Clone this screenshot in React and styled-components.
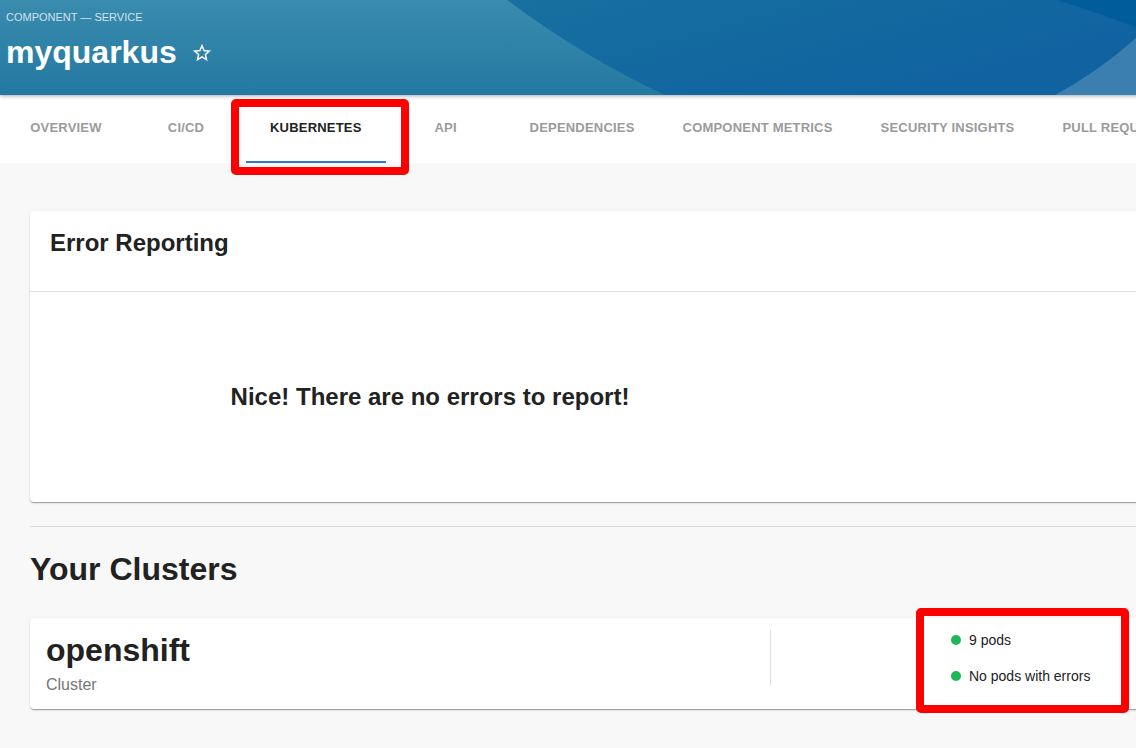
import styled, { createGlobalStyle } from "styled-components";

const GlobalStyle = createGlobalStyle`
  html, body {
    margin: 0;
    padding: 0;
    overflow: hidden;
    background: #f8f8f8;
  }

  * {
    box-sizing: border-box;
  }

  body {
    font-family: "Liberation Sans", Arial, sans-serif;
    color: #222;
  }
`;

const Page = styled.div`
  position: relative;
  width: 1400px;
  min-height: 748px;
  background: #f8f8f8;
`;

const Header = styled.header`
  position: relative;
  height: 95px;
  padding: 10px 6px 0;
  color: #fff;
  overflow: hidden;
  box-shadow: 0 1px 4px rgba(0, 0, 0, 0.35);
  z-index: 2;

  .waves {
    position: absolute;
    top: 0;
    left: 0;
    width: 1136px;
    height: 95px;
    z-index: -1;
  }
`;

const Kind = styled.div`
  font-size: 11px;
  line-height: 14px;
  color: rgba(255, 255, 255, 0.78);
`;

const TitleRow = styled.div`
  display: flex;
  align-items: center;
  gap: 14px;
  margin-top: 10px;

  h1 {
    margin: 0;
    font-size: 32px;
    line-height: 36px;
    font-weight: 700;
  }

  svg {
    width: 22px;
    height: 22px;
    fill: #fff;
    margin-top: 1px;
  }
`;

const TabBar = styled.nav`
  display: flex;
  height: 68px;
  padding-left: 6px;
  background: #fff;
`;

const Tab = styled.div`
  position: relative;
  display: flex;
  align-items: center;
  justify-content: center;
  min-width: 120px;
  padding: 0 24px 4px;
  font-size: 13px;
  font-weight: 700;
  letter-spacing: 0.2px;
  text-transform: uppercase;
  white-space: nowrap;
  color: ${(p) => (p.active ? "#222" : "#9b9b9b")};

  &::after {
    content: "";
    display: ${(p) => (p.active ? "block" : "none")};
    position: absolute;
    left: 0;
    right: 0;
    bottom: 0;
    height: 2px;
    background: #3276d2;
  }
`;

const Content = styled.main`
  padding: 48px 30px 40px;
`;

const Card = styled.section`
  background: #fff;
  border-radius: 4px;
  box-shadow: 0px 2px 1px -1px rgba(0, 0, 0, 0.2),
    0px 1px 1px 0px rgba(0, 0, 0, 0.14), 0px 1px 3px 0px rgba(0, 0, 0, 0.12);
`;

const CardHeader = styled.div`
  height: 81px;
  padding: 16px 20px;
  border-bottom: 1px solid #e2e2e2;

  h3 {
    margin: 0;
    font-size: 24px;
    line-height: 32px;
    font-weight: 700;
  }
`;

const EmptyBody = styled.div`
  display: flex;
  align-items: center;
  justify-content: center;
  width: 800px;
  height: 210px;

  h4 {
    margin: 0;
    font-size: 24px;
    line-height: 32px;
    font-weight: 700;
  }
`;

const Divider = styled.hr`
  margin: 24px 0 26px;
  border: none;
  border-top: 1px solid #dcdcdc;
`;

const SectionTitle = styled.h2`
  margin: 0 0 33px;
  font-size: 32px;
  line-height: 32px;
  font-weight: 700;
`;

const ClusterCard = styled(Card)`
  display: grid;
  grid-template-columns: 740px 1px 1fr;
  align-items: start;
  height: 91px;
`;

const ClusterName = styled.div`
  padding: 16px 16px 0;

  h2 {
    margin: 0;
    font-size: 32px;
    line-height: 32px;
    font-weight: 700;
  }

  p {
    margin: 7px 0 0;
    font-size: 16px;
    line-height: 24px;
    color: #767676;
  }
`;

const VerticalRule = styled.div`
  height: 56px;
  margin-top: 12px;
  background: #dedede;
`;

const StatusList = styled.div`
  display: grid;
  gap: 16px;
  margin-top: 12px;
  padding-left: 180px;
`;

const Status = styled.div`
  display: flex;
  align-items: center;
  gap: 8px;
  font-size: 14px;
  line-height: 20px;
  color: #222;

  &::before {
    content: "";
    width: 10px;
    height: 10px;
    border-radius: 50%;
    background: ${(p) => p.color || "#1db954"};
  }
`;

const Highlight = styled.div`
  position: absolute;
  left: ${(p) => p.x}px;
  top: ${(p) => p.y}px;
  width: ${(p) => p.w}px;
  height: ${(p) => p.h}px;
  border: 8px solid #ff0000;
  border-radius: 5px;
  pointer-events: none;
  z-index: 5;
`;

const tabs = [
  "Overview",
  "CI/CD",
  "Kubernetes",
  "API",
  "Dependencies",
  "Component Metrics",
  "Security Insights",
  "Pull Requests",
];

const HeaderWaves = () => (
  <svg className="waves" viewBox="0 0 1136 95" preserveAspectRatio="none">
    <defs>
      <linearGradient id="bg" x1="0" y1="0" x2="1" y2="0.3">
        <stop offset="0" stopColor="#2a7fa6" />
        <stop offset="0.5" stopColor="#156e9f" />
        <stop offset="1" stopColor="#1063a0" />
      </linearGradient>
      <linearGradient id="lite" x1="0" y1="0" x2="0" y2="1">
        <stop offset="0" stopColor="#3a8cae" />
        <stop offset="1" stopColor="#2479a2" />
      </linearGradient>
    </defs>
    <rect width="1136" height="95" fill="url(#bg)" />
    <path d="M0 0 H507 Q585 58 665 95 H0 Z" fill="url(#lite)" />
    <path d="M1057 0 H1136 V27 Q1095 12 1057 0 Z" fill="#005c9b" />
    <path d="M1136 38 Q1098 72 1055 95 H1136 Z" fill="#3a7fb0" />
  </svg>
);

const App = () => {
  return (
    <>
      <GlobalStyle />
      <Page>
        <Header>
          <HeaderWaves />
          <Kind>COMPONENT — SERVICE</Kind>
          <TitleRow>
            <h1>myquarkus</h1>
            <svg viewBox="0 0 24 24">
              <path d="M22 9.24l-7.19-.62L12 2 9.19 8.63 2 9.24l5.46 4.73L5.82 21 12 17.27 18.18 21l-1.63-7.03L22 9.24zM12 15.4l-3.76 2.27 1-4.28-3.32-2.88 4.38-.38L12 6.1l1.71 4.04 4.38.38-3.32 2.88 1 4.28L12 15.4z" />
            </svg>
          </TitleRow>
        </Header>

        <TabBar>
          {tabs.map((tab) => (
            <Tab key={tab} active={tab === "Kubernetes"}>
              {tab}
            </Tab>
          ))}
        </TabBar>

        <Content>
          <Card>
            <CardHeader>
              <h3>Error Reporting</h3>
            </CardHeader>
            <EmptyBody>
              <h4>Nice! There are no errors to report!</h4>
            </EmptyBody>
          </Card>

          <Divider />

          <SectionTitle>Your Clusters</SectionTitle>

          <ClusterCard>
            <ClusterName>
              <h2>openshift</h2>
              <p>Cluster</p>
            </ClusterName>
            <VerticalRule />
            <StatusList>
              <Status>9 pods</Status>
              <Status>No pods with errors</Status>
            </StatusList>
          </ClusterCard>
        </Content>

        <Highlight x={231} y={99} w={178} h={76} />
        <Highlight x={916} y={608} w={213} h={105} />
      </Page>
    </>
  );
};

export default App;
